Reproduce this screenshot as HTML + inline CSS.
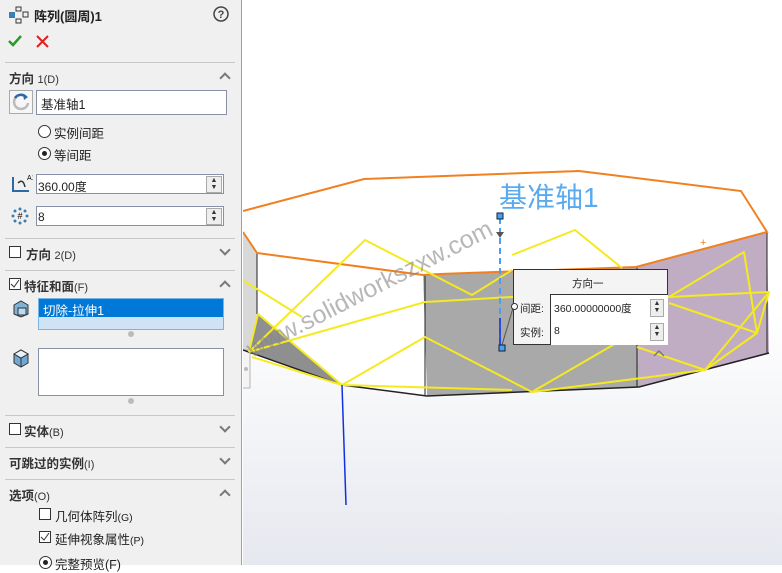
<!DOCTYPE html>
<html><head><meta charset="utf-8"><style>
*{margin:0;padding:0;box-sizing:border-box}
body{width:782px;height:565px;overflow:hidden;position:relative;font-family:"Liberation Sans","Noto Sans CJK SC",sans-serif;font-size:12px;color:#222;background:#fff}
#panel{position:absolute;left:0;top:0;width:242px;height:565px;background:#f0f0f0;border-right:1px solid #a0a0a0}
.a{position:absolute;white-space:nowrap}
.sep{position:absolute;left:5px;width:230px;height:1px;background:#c8c8c8}
.h{font-weight:bold;font-size:12.5px;color:#333}
.h small{font-weight:normal;font-size:11px}
.chev{position:absolute;left:221px;width:8px;height:8px;border-left:2px solid #777;border-top:2px solid #777}
.up{transform:rotate(45deg)}
.dn{transform:rotate(225deg)}
.box{position:absolute;background:#fff;border:1px solid #8a8fa8}
.cb{position:absolute;width:12px;height:12px;border:1px solid #333;background:#fff}
.rd{position:absolute;width:13px;height:13px;border:1px solid #333;border-radius:50%;background:#fff}
.spin{position:absolute;width:16px;height:17px;border:1px solid #aaa;background:#eee;font-size:7px;line-height:7px;text-align:center;color:#333}
</style></head><body>
<div id="panel">
<svg class="a" style="left:8px;top:6px" width="22" height="18" viewBox="0 0 22 18"><rect x="1" y="6" width="6" height="6" fill="#3a7fb0"/><rect x="8" y="1" width="5" height="4" fill="none" stroke="#333"/><rect x="15" y="6" width="5" height="5" fill="none" stroke="#333"/><rect x="8" y="13" width="5" height="4" fill="none" stroke="#333"/></svg>
<div class="a" style="left:34px;top:6px;font-weight:bold;font-size:13px">阵列(圆周)1</div>
<svg class="a" style="left:213px;top:6px" width="16" height="16"><circle cx="8" cy="8" r="7" fill="none" stroke="#444" stroke-width="1.5"/><text x="8" y="12" font-size="11" font-weight="bold" text-anchor="middle" fill="#444" font-family="Liberation Sans">?</text></svg>
<svg class="a" style="left:7px;top:34px" width="16" height="14"><path d="M2 7 L6 11 L14 2" stroke="#2a9a2a" stroke-width="2.5" fill="none"/></svg>
<svg class="a" style="left:36px;top:35px" width="13" height="13"><path d="M1 1L12 12M12 1L1 12" stroke="#e02020" stroke-width="2"/></svg>
<div class="sep" style="top:62px"></div>
<div class="a h" style="left:9px;top:68px">方向 <small>1(D)</small></div><div class="chev up" style="top:74px"></div>
<div class="a" style="left:9px;top:90px;width:24px;height:24px;border:1px solid #aaa;background:#f6f6f6"><svg width="22" height="22"><path d="M16 6 A7 7 0 1 0 18 12" stroke="#bbb" stroke-width="2.5" fill="none"/><path d="M5 7 A7 7 0 0 1 16 6" stroke="#2a6aa8" stroke-width="2.5" fill="none"/><path d="M13 3 L18 6 L14 9Z" fill="#2a6aa8"/></svg></div>
<div class="box" style="left:36px;top:90px;width:191px;height:25px"><span class="a" style="left:4px;top:3px;font-size:12.5px">基准轴1</span></div>
<div class="rd" style="left:38px;top:125px"></div><div class="a" style="left:54px;top:123px;font-size:12.5px">实例间距</div>
<div class="rd" style="left:38px;top:147px"><div style="position:absolute;left:3px;top:3px;width:5px;height:5px;border-radius:50%;background:#222"></div></div><div class="a" style="left:54px;top:145px;font-size:12.5px">等间距</div>
<svg class="a" style="left:11px;top:173px" width="22" height="20"><path d="M2 4V18H18" stroke="#2a6aa8" stroke-width="2" fill="none"/><path d="M7 10 Q12 5 14 14" stroke="#333" stroke-width="1.5" fill="none"/><text x="16" y="7" font-size="7" font-family="Liberation Sans">A1</text></svg>
<div class="box" style="left:36px;top:174px;width:188px;height:20px"><span class="a" style="left:1px;top:3px">360.00度</span><div class="spin" style="left:169px;top:1px">▲<br>▼</div></div>
<svg class="a" style="left:11px;top:207px" width="18" height="18"><g fill="#3a7fb0"><circle cx="9" cy="2" r="1.5"/><circle cx="9" cy="16" r="1.5"/><circle cx="2" cy="9" r="1.5"/><circle cx="16" cy="9" r="1.5"/><circle cx="4" cy="4" r="1.5"/><circle cx="14" cy="4" r="1.5"/><circle cx="4" cy="14" r="1.5"/><circle cx="14" cy="14" r="1.5"/></g><text x="9" y="12" font-size="9" text-anchor="middle" font-family="Liberation Sans">#</text></svg>
<div class="box" style="left:36px;top:206px;width:188px;height:20px"><span class="a" style="left:1px;top:3px">8</span><div class="spin" style="left:169px;top:1px">▲<br>▼</div></div>
<div class="sep" style="top:238px"></div>
<div class="cb" style="left:9px;top:246px"></div><div class="a h" style="left:26px;top:244px">方向 <small>2(D)</small></div><div class="chev dn" style="top:246px"></div>
<div class="sep" style="top:270px"></div>
<div class="cb" style="left:9px;top:278px"><svg width="10" height="10" style="position:absolute;left:0;top:0"><path d="M1 5L4 8L9 1" stroke="#333" fill="none"/></svg></div><div class="a h" style="left:24px;top:276px">特征和面<small>(F)</small></div><div class="chev up" style="top:282px"></div>
<svg class="a" style="left:12px;top:300px" width="18" height="18"><path d="M2 5L9 1L16 5V14L9 17L2 14Z" fill="#7fb3d5" stroke="#333"/><path d="M6 8H14V15H6Z" fill="#b9dcf0" stroke="#333"/></svg>
<div class="a" style="left:38px;top:298px;width:186px;height:32px;border:1px solid #7ab4e4;background:#cfe3f5"><div style="background:#0078d7;color:#fff;height:18px;padding:1px 4px;font-size:12.5px">切除-拉伸1</div></div>
<div class="a" style="left:128px;top:331px;width:6px;height:6px;border-radius:50%;background:#bbb"></div>
<svg class="a" style="left:12px;top:349px" width="18" height="20"><path d="M2 5L9 1L16 5V14L9 18L2 14Z" fill="#6fa9d2" stroke="#333"/><path d="M2 5L9 9L16 5M9 9V18" stroke="#333" fill="none"/><path d="M2 5L9 1L16 5L9 9Z" fill="#e8f3fa" stroke="#333"/></svg>
<div class="box" style="left:38px;top:348px;width:186px;height:48px"></div>
<div class="a" style="left:128px;top:398px;width:6px;height:6px;border-radius:50%;background:#bbb"></div>
<div class="sep" style="top:415px"></div>
<div class="cb" style="left:9px;top:423px"></div><div class="a h" style="left:24px;top:421px">实体<small>(B)</small></div><div class="chev dn" style="top:423px"></div>
<div class="sep" style="top:447px"></div>
<div class="a h" style="left:9px;top:453px">可跳过的实例<small>(I)</small></div><div class="chev dn" style="top:455px"></div>
<div class="sep" style="top:479px"></div>
<div class="a h" style="left:9px;top:485px">选项<small>(O)</small></div><div class="chev up" style="top:491px"></div>
<div class="cb" style="left:39px;top:508px"></div><div class="a" style="left:55px;top:506px;font-size:12.5px">几何体阵列<small style="font-size:10.5px">(G)</small></div>
<div class="cb" style="left:39px;top:531px"><svg width="10" height="10" style="position:absolute;left:0;top:0"><path d="M1 5L4 8L9 1" stroke="#333" fill="none"/></svg></div><div class="a" style="left:55px;top:529px;font-size:12.5px">延伸视象属性<small style="font-size:10.5px">(P)</small></div>
<div class="rd" style="left:39px;top:556px"><div style="position:absolute;left:3px;top:3px;width:5px;height:5px;border-radius:50%;background:#222"></div></div><div class="a" style="left:55px;top:554px;font-size:12.5px">完整预览(F)</div>
</div>
<svg class="a" style="left:243px;top:0" width="539" height="565" viewBox="243 0 539 565">
<defs><linearGradient id="g" x1="0" y1="0" x2="0" y2="1"><stop offset="0.55" stop-color="#fff"/><stop offset="1" stop-color="#e6e8ef"/></linearGradient></defs>
<rect x="243" y="0" width="539" height="565" fill="url(#g)"/>
<rect x="243" y="232" width="14" height="118" fill="#d8d8d8"/>
<rect x="242" y="350" width="8" height="38" fill="#f4f4f4" stroke="#999" stroke-width="0.7"/>
<circle cx="246" cy="369" r="2" fill="#bbb"/>
<path d="M243 211L364 179L579 171L741 191L767 232L636 267L440 274L423 275L257 253L243 232Z" fill="#fff"/>
<path d="M423 275L636 267L639 387L427 396Z" fill="#a9a9a9"/>
<path d="M636 267L767 232L769 353L639 387Z" fill="#c0adc3"/>
<path d="M257 253L423 275L427 396L342 385L257 360Z" fill="#fff"/>
<path d="M258 314L342 385L249 352Z" fill="#8f8f8f"/>
<path d="M243 350L342 385L427 396L639 387L769 353" stroke="#222" stroke-width="1.5" fill="none"/>
<path d="M257 253V314M425 275V396M637 267V387M767 232V353" stroke="#222" stroke-width="1"/>
<path d="M243 211L364 179L579 171L741 191L767 232L636 267L440 274L423 275L257 253L243 232" stroke="#f08020" stroke-width="2" fill="none"/>
<g stroke="#f5ea20" stroke-width="2" fill="none" stroke-linejoin="round">
<path d="M249 352L365 240L472 295L512 270"/>
<path d="M512 255L575 230L622 268"/>
<path d="M244 281L302 317"/>
<path d="M249 352L425 302L512 297L669 297"/>
<path d="M342 385L425 337L532 392"/>
<path d="M342 385L512 390"/>
<path d="M252 357L342 385L258 314L249 352"/>
<path d="M532 392L705 370L769 292L757 333L744 252L669 297"/>
<path d="M669 303L757 333L705 370L637 347"/>
<path d="M532 392L625 338"/>
<path d="M669 297L769 292"/>
</g>
<path d="M342 385L346 505" stroke="#1030e0" stroke-width="1.5"/>
<path d="M500 218V345" stroke="#4a9ff0" stroke-width="2" stroke-dasharray="6,4"/>
<path d="M500 318V345" stroke="#1030e0" stroke-width="1.5"/>
<path d="M502 345L513 308" stroke="#555" stroke-width="1"/>
<rect x="497" y="213" width="6" height="6" fill="#4aa0f0" stroke="#123"/>
<rect x="499" y="345" width="6" height="6" fill="#4aa0f0" stroke="#123"/>
<path d="M496 232H504L500 238Z" fill="#555"/>
<text x="499" y="207" font-size="28" fill="#5aaaf0" font-family="Liberation Sans, Noto Sans CJK SC, sans-serif">基准轴1</text>
<text x="700" y="246" font-size="11" fill="#f08020" font-family="Liberation Sans">+</text>
<text x="252" y="358" font-size="25" fill="#888" opacity="0.6" transform="rotate(-27 252 358)" font-family="Liberation Sans, sans-serif">www.solidworkszxw.com</text>
<path d="M654 356L659 351L664 356" stroke="#777" stroke-width="1.5" fill="none"/>
</svg>
<div class="a" style="left:513px;top:269px;width:155px;height:76px;background:#f4f4f4;border:1px solid #333;font-size:10.5px">
<div class="a" style="left:58px;top:6px">方向一</div>
<div class="a" style="left:36px;top:24px;width:118px;height:51px;border-top:1px solid #333;border-left:1px solid #333;background:#fff"></div>
<div class="a" style="left:-3px;top:33px;width:7px;height:7px;border:1px solid #333;border-radius:50%;background:#fff"></div>
<div class="a" style="left:6px;top:31px">间距:</div><div class="a" style="left:40px;top:31px">360.00000000度</div>
<div class="a" style="left:6px;top:55px">实例:</div><div class="a" style="left:40px;top:55px">8</div>
<div class="spin" style="left:136px;top:29px;width:14px;height:18px">▲<br>▼</div>
<div class="spin" style="left:136px;top:53px;width:14px;height:18px">▲<br>▼</div>
</div>
</body></html>
